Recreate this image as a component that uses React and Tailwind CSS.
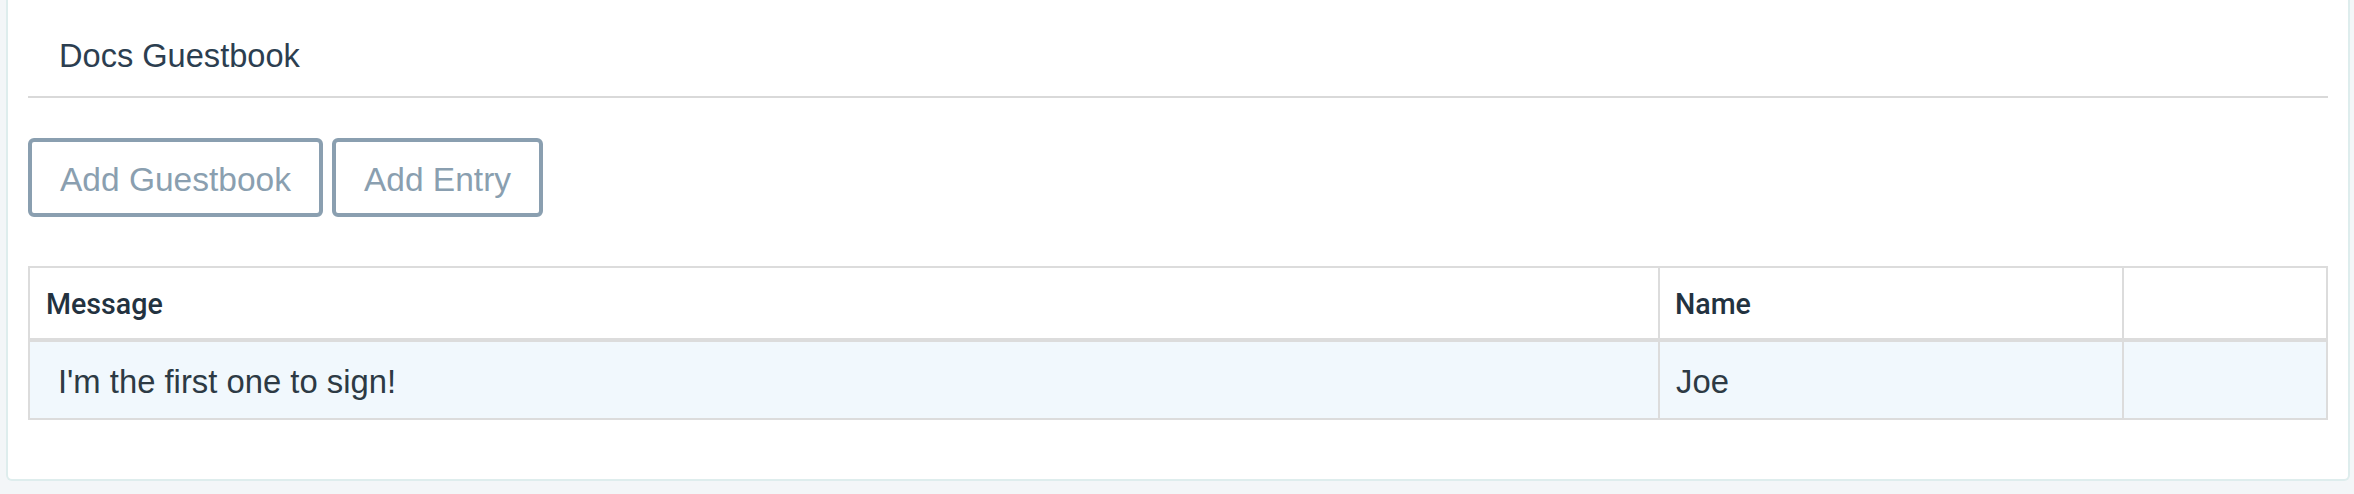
export default function App() {
  const entries = [{ id: 1, message: "I'm the first one to sign!", name: "Joe" }];

  return (
    <div
      className="h-[494px] bg-[#f3f6f8] pl-[6px] pr-[4px] pb-[13px] text-[#2d3a44]"
      style={{ fontFamily: '"Liberation Sans", Arial, sans-serif' }}
    >
      <div className="flex h-full flex-col rounded-b-[6px] border-2 border-t-0 border-[#deeded] bg-white px-[20px]">
        <div className="h-[96px] pl-[31px] pt-[32px]">
          <h2 className="text-[32.6px] leading-[48px] text-[#2c3e50]">Docs Guestbook</h2>
        </div>
        <div className="h-[2px] bg-[#d9d9d9]" />

        <div className="mt-[40px] flex gap-[9px]">
          <button className="h-[79px] rounded-[6px] border-[4px] border-[#8a9fb0] bg-white px-[28px] pt-[5px] text-[33.5px] text-[#8a9fb0]">
            Add Guestbook
          </button>
          <button className="h-[79px] rounded-[6px] border-[4px] border-[#8a9fb0] bg-white px-[28px] pt-[5px] text-[33.5px] text-[#8a9fb0]">
            Add Entry
          </button>
        </div>

        <div className="mt-[49px] border-2 border-[#dcdcdc]">
          <div
            className="flex h-[74px] border-b-4 border-[#dcdcdc] text-[28.6px] font-medium text-[#233240]"
            style={{ fontFamily: "Roboto, Arial, sans-serif" }}
          >
            <div className="flex w-[1630px] items-center border-r-2 border-[#dcdcdc] pl-[16px] pt-[3px]">Message</div>
            <div className="flex w-[464px] items-center border-r-2 border-[#dcdcdc] pl-[15px] pt-[3px]">Name</div>
            <div className="flex-1" />
          </div>
          {entries.map((e) => (
            <div key={e.id} className="flex h-[76px] bg-[#f1f8fd] text-[32.8px]">
              <div className="flex w-[1630px] items-center border-r-2 border-[#dcdcdc] pl-[28px] pt-[3px]">{e.message}</div>
              <div className="flex w-[464px] items-center border-r-2 border-[#dcdcdc] pl-[16px] pt-[3px]">{e.name}</div>
              <div className="flex-1" />
            </div>
          ))}
        </div>
      </div>
    </div>
  );
}
